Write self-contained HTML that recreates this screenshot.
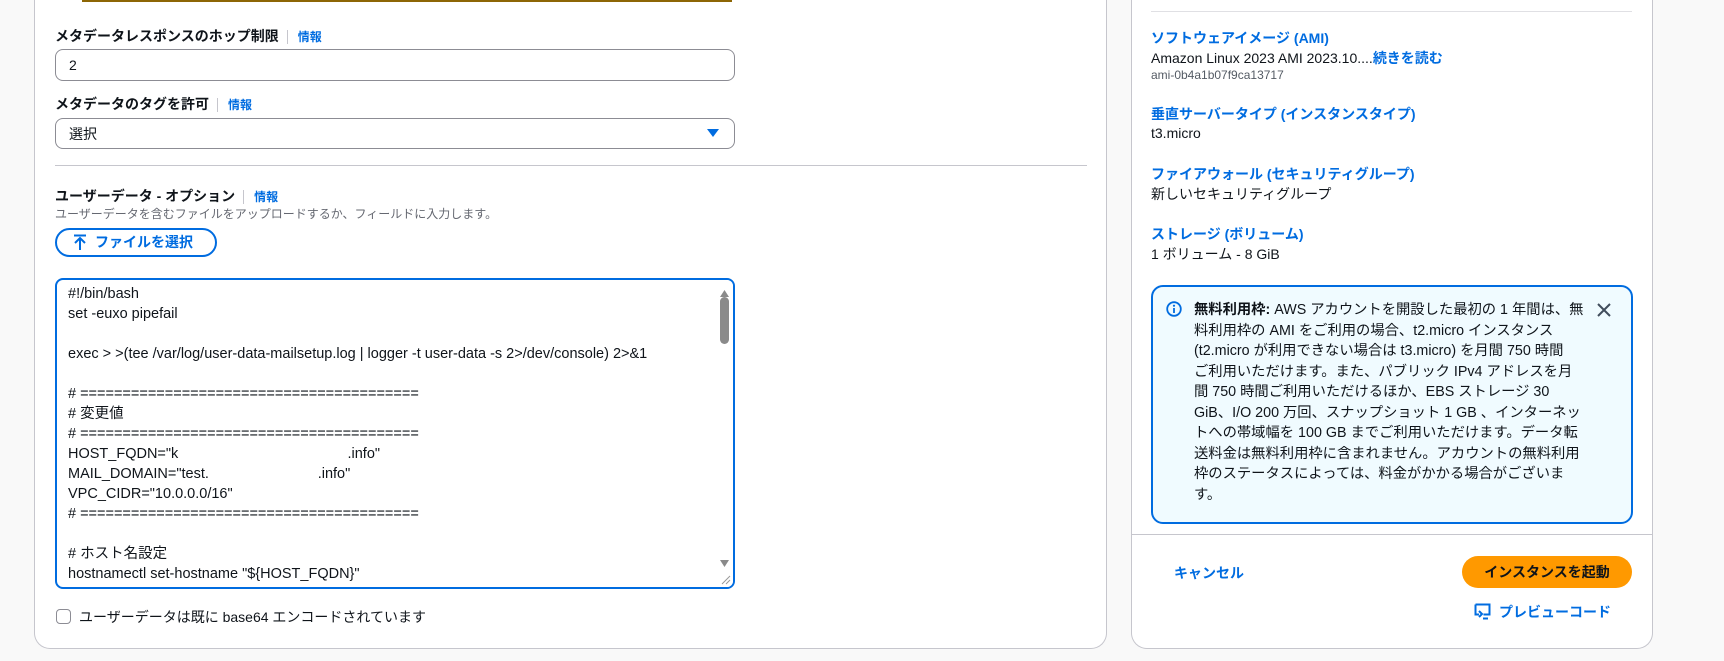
<!DOCTYPE html>
<html><head><meta charset="utf-8"><style>
*{box-sizing:border-box;margin:0;padding:0}
body{width:1724px;height:661px;background:#f9f9f9;font-family:"Liberation Sans","Noto Sans CJK JP",sans-serif;color:#0f141a;font-size:14px;position:relative;overflow:hidden}
.abs{position:absolute}
.panel{background:#fff;border:1px solid #c6c6cd;border-top:none;border-radius:0 0 16px 16px}
.lbl{font-weight:bold;font-size:14px;white-space:nowrap}
.info{color:#006ce0;font-weight:bold;font-size:12px;border-left:1px solid #c6c6cd;padding-left:10px;margin-left:8px}
.inp{border:1px solid #8c8c94;border-radius:8px;background:#fff;padding-left:13px;line-height:30px;font-size:14px}
.code{font-size:14.5px;line-height:20px;white-space:pre;color:#0f141a}
.k{color:#006ce0;font-weight:bold;font-size:14px;white-space:nowrap}
.v{font-size:14px;white-space:nowrap}
</style></head><body>
<div class="abs panel" style="left:34px;top:-20px;width:1073px;height:669px"></div>
<div class="abs" style="left:82px;top:0;width:650px;height:2px;background:#8d6605"></div>
<div class="abs lbl" style="left:55px;top:26px">メタデータレスポンスのホップ制限<span class="info">情報</span></div>
<div class="abs inp" style="left:55px;top:49px;width:680px;height:32px">2</div>
<div class="abs lbl" style="left:55px;top:94px">メタデータのタグを許可<span class="info">情報</span></div>
<div class="abs inp" style="left:55px;top:118px;width:680px;height:31px">選択</div>
<svg class="abs" style="left:706px;top:128px" width="14" height="10"><path d="M1 1h12L7 9z" fill="#006ce0"/></svg>
<div class="abs" style="left:55px;top:165px;width:1032px;height:1px;background:#c6c6cd"></div>
<div class="abs lbl" style="left:55px;top:186px">ユーザーデータ - オプション<span class="info">情報</span></div>
<div class="abs" style="left:55px;top:205px;font-size:12px;color:#656871;white-space:nowrap">ユーザーデータを含むファイルをアップロードするか、フィールドに入力します。</div>
<div class="abs" style="left:55px;top:228px;width:162px;height:29px;border:2px solid #006ce0;border-radius:16px;color:#006ce0;font-weight:bold;font-size:14px;line-height:25px;padding-left:38px">ファイルを選択</div>
<svg class="abs" style="left:72px;top:234px" width="16" height="17"><path d="M2 1.5h12M8 4v12M3 9l5-5 5 5" stroke="#006ce0" stroke-width="2" fill="none"/></svg>
<div class="abs" style="left:55px;top:278px;width:680px;height:311px;border:2px solid #006ce0;border-radius:8px;overflow:hidden;background:#fff">
<div class="code" style="position:absolute;left:11px;top:4px">#!/bin/bash
set -euxo pipefail

exec &gt; &gt;(tee /var/log/user-data-mailsetup.log | logger -t user-data -s 2&gt;/dev/console) 2&gt;&amp;1

# ========================================
# 変更値
# ========================================
HOST_FQDN="k                                          .info"
MAIL_DOMAIN="test.                           .info"
VPC_CIDR="10.0.0.0/16"
# ========================================

# ホスト名設定
hostnamectl set-hostname "${HOST_FQDN}"</div>
<div style="position:absolute;right:0;top:0;width:16px;height:100%;background:#fff"></div>
<svg style="position:absolute;right:4px;top:10px" width="9" height="8"><path d="M0 7h9L4.5 0z" fill="#8a8a8a"/></svg>
<div style="position:absolute;right:4px;top:17px;width:9px;height:47px;background:#8a8a8a;border-radius:5px"></div>
<svg style="position:absolute;right:4px;top:280px" width="9" height="8"><path d="M0 0h9L4.5 7z" fill="#8a8a8a"/></svg>
<svg style="position:absolute;right:2px;bottom:2px" width="12" height="12"><path d="M11 3L3 11M11 7L7 11" stroke="#999" stroke-width="1"/></svg>
</div>
<div class="abs" style="left:56px;top:609px;width:15px;height:15px;border:1.5px solid #8c8c94;border-radius:4px"></div>
<div class="abs" style="left:79px;top:607px;white-space:nowrap;font-size:14px">ユーザーデータは既に base64 エンコードされています</div>

<div class="abs panel" style="left:1131px;top:-20px;width:522px;height:669px"></div>
<div class="abs" style="left:1151px;top:11px;width:481px;height:1px;background:#e0e0e4"></div>
<div class="abs k" style="left:1151px;top:28px">ソフトウェアイメージ (AMI)</div>
<div class="abs v" style="left:1151px;top:48px">Amazon Linux 2023 AMI 2023.10....<span class="k">続きを読む</span></div>
<div class="abs" style="left:1151px;top:68px;font-size:12px;color:#545b64">ami-0b4a1b07f9ca13717</div>
<div class="abs k" style="left:1151px;top:104px">垂直サーバータイプ (インスタンスタイプ)</div>
<div class="abs v" style="left:1151px;top:125px">t3.micro</div>
<div class="abs k" style="left:1151px;top:164px">ファイアウォール (セキュリティグループ)</div>
<div class="abs v" style="left:1151px;top:184px">新しいセキュリティグループ</div>
<div class="abs k" style="left:1151px;top:224px">ストレージ (ボリューム)</div>
<div class="abs v" style="left:1151px;top:244px">1 ボリューム - 8 GiB</div>
<div class="abs" style="left:1151px;top:285px;width:482px;height:239px;border:2px solid #006ce0;border-radius:12px;background:#f0fbff"></div>
<svg class="abs" style="left:1166px;top:301px" width="16" height="16"><circle cx="8" cy="8" r="6.8" stroke="#006ce0" stroke-width="1.8" fill="none"/><path d="M8 7v5" stroke="#006ce0" stroke-width="1.8"/><circle cx="8" cy="4.7" r="1.1" fill="#006ce0"/></svg>
<div class="abs" style="left:1194px;top:300px;font-size:14.3px;line-height:20.5px;white-space:nowrap">
<b>無料利用枠:</b> AWS アカウントを開設した最初の 1 年間は、無<br>料利用枠の AMI をご利用の場合、t2.micro インスタンス<br>(t2.micro が利用できない場合は t3.micro) を月間 750 時間<br>ご利用いただけます。また、パブリック IPv4 アドレスを月<br>間 750 時間ご利用いただけるほか、EBS ストレージ 30<br>GiB、I/O 200 万回、スナップショット 1 GB 、インターネッ<br>トへの帯域幅を 100 GB までご利用いただけます。データ転<br>送料金は無料利用枠に含まれません。アカウントの無料利用<br>枠のステータスによっては、料金がかかる場合がございま<br>す。</div>
<svg class="abs" style="left:1597px;top:303px" width="14" height="14"><path d="M1 1l12 12M13 1L1 13" stroke="#414d5c" stroke-width="2"/></svg>
<div class="abs" style="left:1132px;top:534px;width:520px;height:1px;background:#c6c6cd"></div>
<div class="abs k" style="left:1174px;top:563px">キャンセル</div>
<div class="abs" style="left:1462px;top:556px;width:170px;height:32px;background:#ff9900;border-radius:16px;font-weight:bold;font-size:14px;line-height:32px;text-align:center">インスタンスを起動</div>
<svg class="abs" style="left:1474px;top:603px" width="17" height="17"><path d="M1.5 1.5h14v10h-6M5 11.5H1.5v-10" stroke="#006ce0" stroke-width="2" fill="none"/><path d="M5 8l3 3-3 3M9 15.5h5" stroke="#006ce0" stroke-width="2" fill="none"/></svg>
<div class="abs k" style="left:1499px;top:602px">プレビューコード</div>
</body></html>
